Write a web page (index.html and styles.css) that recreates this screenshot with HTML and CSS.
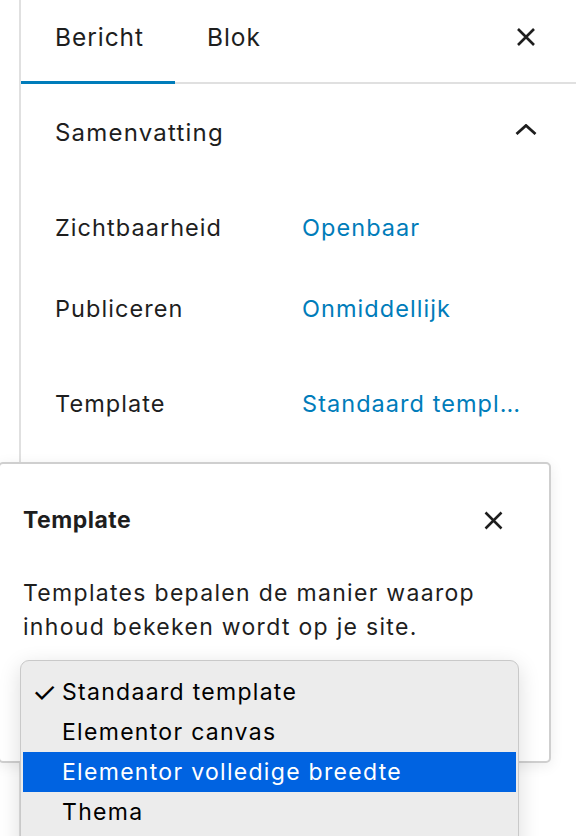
FILE: index.html
```html
<!DOCTYPE html>
<html lang="nl">
<head>
<meta charset="utf-8">
<title>Template</title>
<link rel="stylesheet" href="styles.css">
</head>
<body>
<div class="sidebar">
  <div class="tabs">
    <div class="tab active">Bericht</div>
    <div class="tab tab-second">Blok</div>
    <div class="tab-close">
      <svg width="20" height="20" viewBox="0 0 20 20"><path d="M2 2 L18 18 M18 2 L2 18" stroke="#1e1e1e" stroke-width="2.6" fill="none"/></svg>
    </div>
  </div>
  <div class="panel">
    <div class="panel-head">
      <span class="panel-title">Samenvatting</span>
      <svg class="chev" width="22" height="11" viewBox="0 0 22 11"><path d="M1.5 10 L11 1.5 L20.5 10" stroke="#1e1e1e" stroke-width="2.8" fill="none"/></svg>
    </div>
    <div class="row row-1"><span class="label">Zichtbaarheid</span><span class="value">Openbaar</span></div>
    <div class="row row-2"><span class="label">Publiceren</span><span class="value">Onmiddellijk</span></div>
    <div class="row row-3"><span class="label">Template</span><span class="value" title="Standaard template">Standaard templ…</span></div>
  </div>
</div>

<div class="popover">
  <div class="pop-head">
    <span class="pop-title">Template</span>
    <svg class="pop-close" width="19" height="19" viewBox="0 0 19 19"><path d="M1.5 1.5 L17.5 17.5 M17.5 1.5 L1.5 17.5" stroke="#1e1e1e" stroke-width="2.5" fill="none"/></svg>
  </div>
  <p class="pop-desc">Templates bepalen de manier waarop inhoud bekeken wordt op je site.</p>
  <div class="select"></div>
</div>

<div class="menu">
  <div class="item"><span class="check">✓</span>Standaard template</div>
  <div class="item">Elementor canvas</div>
  <div class="item selected">Elementor volledige breedte</div>
  <div class="item">Thema</div>
</div>
</body>
</html>
```
FILE: styles.css
```css
* { box-sizing: border-box; }
html, body {
  margin: 0;
  padding: 0;
  width: 576px;
  height: 836px;
  overflow: hidden;
  background: #fff;
  font-family: Inter, "Liberation Sans", sans-serif;
  color: #1e1e1e;
}
.sidebar {
  margin-left: 19px;
  border-left: 2px solid #e0e0e0;
  height: 836px;
}
.tabs {
  display: flex;
  height: 84px;
  box-shadow: inset 0 -2px 0 #e0e0e0;
}
.tab {
  font-size: 24.5px;
  line-height: 30px;
  padding-top: 22px;
  padding-left: 34px;
  width: 154px;
  letter-spacing: 0.95px;
}
.tab.active { box-shadow: inset 0 -3px 0 #007cba; }
.tab-second { padding-left: 32px; width: auto; }
.tab-close {
  margin-left: auto;
  margin-right: 40px;
  padding-top: 27px;
}
.panel { padding: 31px 0 0 34px; }
.panel-head {
  display: flex;
  align-items: center;
  height: 34px;
  justify-content: space-between;
  padding-right: 39px;
}
.panel-title { font-size: 24px; letter-spacing: 1.2px; }
.chev { margin-top: -5px; }
.row {
  display: flex;
  align-items: center;
  height: 34px;
  font-size: 23.5px;
  letter-spacing: 1.05px;
}
.row-1 { margin-top: 61px; }
.row-2 { margin-top: 47px; }
.row-3 { margin-top: 61px; }
.label { width: 247px; flex: none; }
.value {
  color: #007cba;
  white-space: nowrap;
}
.popover {
  position: absolute;
  left: -2px;
  top: 462px;
  width: 553px;
  height: 301px;
  background: #fff;
  border: 2px solid #cfcfcf;
  border-radius: 5px;
  box-shadow: 0 3px 14px rgba(0,0,0,0.08);
  padding: 41px 23px 0 23px;
}
.pop-head {
  display: flex;
  align-items: center;
  justify-content: space-between;
  height: 30px;
  padding-right: 23px;
}
.pop-title { font-size: 23px; font-weight: 700; letter-spacing: 0.5px; }
.pop-desc {
  margin: 41px 0 0;
  font-size: 23px;
  line-height: 34px;
  letter-spacing: 1.3px;
}
.select {
  margin: 28px 0 0 -3px;
  width: 499px;
  height: 56px;
  border: 2px solid #007cba;
  border-radius: 3px;
}
.menu {
  position: absolute;
  left: 20px;
  top: 660px;
  width: 499px;
  height: 200px;
  background: #ececec;
  border: 1px solid #c9c9c9;
  border-radius: 9px;
  box-shadow: 0 6px 22px rgba(0,0,0,0.14);
  padding: 11px 2px 0;
  font-size: 23px;
  letter-spacing: 1.3px;
  color: #000;
}
.item {
  height: 40px;
  line-height: 40px;
  padding-left: 39px;
  position: relative;
}
.check {
  position: absolute;
  left: 9px;
  top: 0;
  font-size: 28px;
  letter-spacing: 0;
}
.item.selected { background: #0063e1; color: #fff; }
```
